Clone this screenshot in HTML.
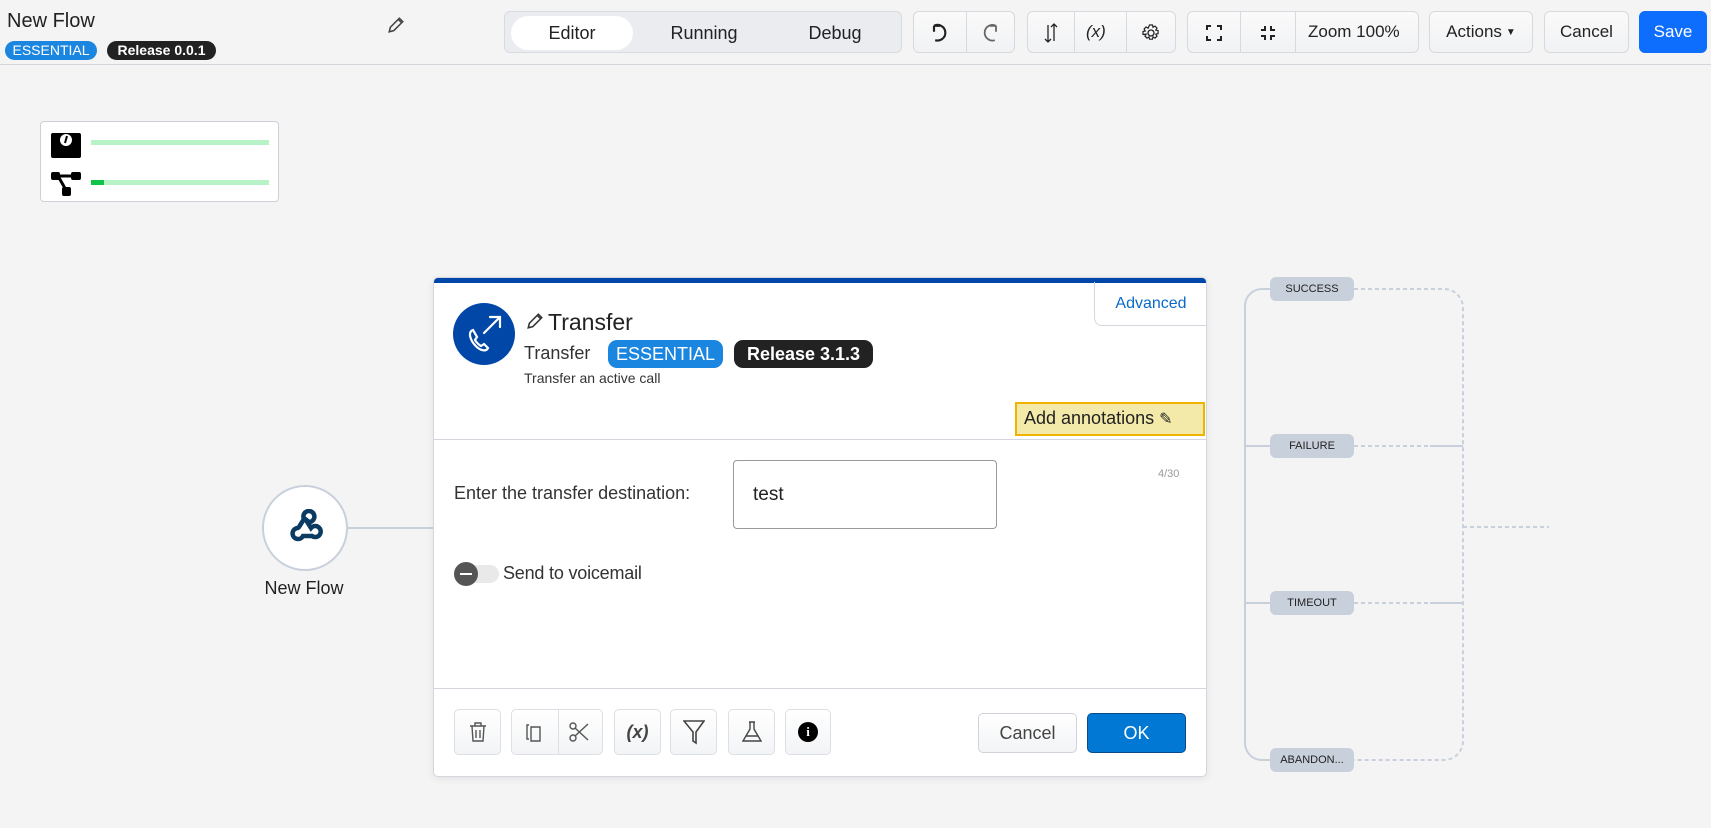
<!DOCTYPE html>
<html><head><meta charset="utf-8"><style>
*{box-sizing:border-box;margin:0;padding:0}
body{width:1711px;height:828px;background:#f4f4f4;font-family:"Liberation Sans",sans-serif;color:#222;position:relative;overflow:hidden}
.a{position:absolute}
.hdr{left:0;top:0;width:1711px;height:65px;border-bottom:1px solid #d4d6dc;background:#f4f4f4}
.badge{position:absolute;border-radius:10px;color:#fff;font-size:14px;text-align:center;font-weight:bold}
.btn{position:absolute;top:11px;height:42px;border:1px solid #d6d9de;border-radius:6px;background:linear-gradient(#fafafa,#f1f2f4);display:flex;align-items:center;justify-content:center;font-size:17px;color:#222}
.sep{position:absolute;top:0;bottom:0;width:1px;background:#d6d9de}
.pill{position:absolute;left:1270px;width:84px;height:24px;border-radius:6px;background:#c8d0dc;font-size:11px;text-align:center;line-height:24px;color:#222}
.fb{position:absolute;top:709px;height:46px;border:1px solid #dcdfe4;border-radius:5px;background:linear-gradient(#fff,#f3f4f6);display:flex;align-items:center;justify-content:center}
</style></head><body>
<div class="a hdr"></div>
<div class="a" style="left:7px;top:10px;font-size:20px">New Flow</div>
<div class="badge" style="left:5px;top:41px;width:92px;height:19px;background:#1a86e0;line-height:19px;font-weight:normal">ESSENTIAL</div>
<div class="badge" style="left:107px;top:41px;width:109px;height:19px;background:#222;line-height:19px">Release 0.0.1</div>
<svg class="a" style="left:387px;top:16px" width="18" height="18" viewBox="0 0 16 16"><path d="M11 2l3 3-8 8-4 1 1-4z M10 3l3 3" fill="none" stroke="#444" stroke-width="1.4"/></svg>

<div class="a" style="left:504px;top:11px;width:398px;height:42px;background:#eaecf0;border:1px solid #d8dbe0;border-radius:6px"></div>
<div class="a" style="left:511px;top:16px;width:122px;height:34px;background:#fff;border-radius:17px"></div>
<div class="a" style="left:511px;top:23px;width:122px;text-align:center;font-size:18px">Editor</div>
<div class="a" style="left:650px;top:23px;width:108px;text-align:center;font-size:18px">Running</div>
<div class="a" style="left:785px;top:23px;width:100px;text-align:center;font-size:18px">Debug</div>

<div class="btn" style="left:913px;width:102px"><div class="sep" style="left:52px"></div>
<svg class="a" style="left:14px;top:9px" width="24" height="24" viewBox="0 0 20 20"><path d="M5 4a6.5 6.5 0 1 1 1 12M5 4v5M5 4h5" fill="none" stroke="#222" stroke-width="1.8"/></svg>
<svg class="a" style="left:64px;top:9px" width="24" height="24" viewBox="0 0 20 20"><path d="M15 4a6.5 6.5 0 1 0-1 12M15 4v5M15 4h-5" fill="none" stroke="#666" stroke-width="1.5"/></svg></div>
<div class="btn" style="left:1027px;width:149px"><div class="sep" style="left:46px"></div><div class="sep" style="left:98px"></div>
<svg class="a" style="left:12px;top:9px" width="22" height="24" viewBox="0 0 22 24"><path d="M8 4v17M5 18l3 3 3-3M14 20V3M11 6l3-3 3 3" fill="none" stroke="#222" stroke-width="1.3"/></svg>
<span class="a" style="left:58px;top:10px;font-style:italic;font-size:17px">(x)</span>
<svg class="a" style="left:113px;top:11px" width="20" height="20" viewBox="0 0 20 20"><circle cx="10" cy="10" r="3" fill="none" stroke="#222" stroke-width="1.3"/><path d="M8.5 2h3l.5 2.3 2-1.2 2 2-1.2 2 2.3.5v3l-2.3.5 1.2 2-2 2-2-1.2-.5 2.3h-3l-.5-2.3-2 1.2-2-2 1.2-2L2 11.5v-3l2.3-.5-1.2-2 2-2 2 1.2z" fill="none" stroke="#222" stroke-width="1.2"/></svg></div>
<div class="btn" style="left:1187px;width:232px;justify-content:flex-start"><div class="sep" style="left:52px"></div><div class="sep" style="left:107px"></div>
<svg class="a" style="left:18px;top:13px" width="16" height="16" viewBox="0 0 16 16"><path d="M1 5V1h4M11 1h4v4M15 11v4h-4M5 15H1v-4" fill="none" stroke="#222" stroke-width="2"/></svg>
<svg class="a" style="left:72px;top:13px" width="16" height="16" viewBox="0 0 16 16"><path d="M1 5h4V1M11 1v4h4M15 11h-4v4M5 15v-4H1" fill="none" stroke="#222" stroke-width="2"/></svg>
<span class="a" style="left:120px;top:10px">Zoom 100%</span></div>
<div class="btn" style="left:1429px;width:104px">Actions<span style="font-size:10px;margin-left:4px">▼</span></div>
<div class="btn" style="left:1544px;width:85px">Cancel</div>
<div class="btn" style="left:1639px;width:68px;background:#0d6efd;border-color:#0d6efd;color:#fff">Save</div>

<div class="a" style="left:40px;top:121px;width:239px;height:81px;background:#fff;border:1px solid #ccd0d8;border-radius:4px"></div>
<svg class="a" style="left:51px;top:130px" width="30" height="28" viewBox="0 0 30 28"><rect x="0" y="3" width="30" height="25" rx="2"/><circle cx="15" cy="11" r="8" fill="#000"/><circle cx="15" cy="10" r="6" fill="#fff"/><path d="M16 6l-2 7" stroke="#000" stroke-width="2"/></svg>
<div class="a" style="left:91px;top:140px;width:178px;height:5px;background:#b8f3c8"></div>
<svg class="a" style="left:51px;top:172px" width="30" height="24" viewBox="0 0 30 24"><rect x="0" y="0" width="9" height="8" rx="2"/><rect x="20" y="0" width="10" height="8" rx="2"/><rect x="11" y="15" width="9" height="9" rx="2"/><path d="M5 4h20M7 4l8 14" stroke="#000" stroke-width="3" fill="none"/></svg>
<div class="a" style="left:91px;top:180px;width:178px;height:5px;background:#b8f3c8"></div>
<div class="a" style="left:91px;top:180px;width:13px;height:5px;background:#0ec54a"></div>

<div class="a" style="left:348px;top:527px;width:86px;height:2px;background:#c8d0dc"></div>
<div class="a" style="left:262px;top:485px;width:86px;height:86px;border-radius:50%;background:#fff;border:2px solid #c8d0dc"></div>
<svg class="a" style="left:285px;top:509px" width="38" height="36" viewBox="0 0 38 36"><g fill="none" stroke="#0b3a63" stroke-width="4.5" stroke-linecap="round"><path d="M14 18L19 10a5.5 5.5 0 1 1 5 3"/><path d="M24 13l-5-4M13 19a5.5 5.5 0 1 0 5 8h9"/><path d="M27 27a5.5 5.5 0 1 0-1-8l-5-8"/></g></svg>
<div class="a" style="left:244px;top:578px;width:120px;text-align:center;font-size:18px">New Flow</div>

<div class="a" style="left:433px;top:277px;width:774px;height:500px;background:#fff;border:1px solid #d4d8de;border-radius:5px;box-shadow:0 2px 8px rgba(0,0,0,.08);overflow:hidden">
<div style="height:5px;background:#0047ab"></div></div>
<div class="a" style="left:1094px;top:282px;width:113px;height:44px;border-left:1px solid #d4d8de;border-bottom:1px solid #d4d8de;border-bottom-left-radius:8px;color:#0a6ac8;font-size:16px;text-align:center;line-height:44px">Advanced</div>
<div class="a" style="left:453px;top:303px;width:62px;height:62px;border-radius:50%;background:#0047a8"></div>
<svg class="a" style="left:453px;top:303px" width="62" height="62" viewBox="0 0 62 62"><g fill="none" stroke="#fff" stroke-width="2.2" stroke-linecap="round"><path d="M31 30L47 14M37 14h10v10"/><path d="M20 27c-3 1-4 4-2 9s7 10 11 11c3 1 5 0 6-2l-4-4-3 2c-2-1-5-4-6-6l2-3z"/></g></svg>
<svg class="a" style="left:526px;top:312px" width="18" height="18" viewBox="0 0 16 16"><path d="M11 2l3 3-8 8-4 1 1-4z M10 3l3 3" fill="none" stroke="#333" stroke-width="1.4"/></svg>
<div class="a" style="left:548px;top:309px;font-size:23px">Transfer</div>
<div class="a" style="left:524px;top:343px;font-size:18px;color:#333">Transfer</div>
<div class="badge" style="left:608px;top:340px;width:115px;height:28px;line-height:28px;background:#1a86e0;border-radius:9px;font-size:18px;font-weight:normal">ESSENTIAL</div>
<div class="badge" style="left:734px;top:340px;width:139px;height:28px;line-height:28px;background:#222;border-radius:9px;font-size:18px">Release 3.1.3</div>
<div class="a" style="left:524px;top:370px;font-size:14px;color:#333">Transfer an active call</div>
<div class="a" style="left:1015px;top:402px;width:190px;height:34px;background:#f3e9a8;border:2px solid #f0b400;font-size:18px;line-height:29px;padding-left:7px">Add annotations <span style="font-size:16px">✎</span></div>
<div class="a" style="left:434px;top:439px;width:772px;height:1px;background:#d4d8de"></div>
<div class="a" style="left:454px;top:483px;font-size:18px;color:#333">Enter the transfer destination:</div>
<div class="a" style="left:733px;top:460px;width:264px;height:69px;border:1px solid #999;border-radius:4px;font-size:19px;padding:23px 0 0 19px">test</div>
<div class="a" style="left:1158px;top:468px;font-size:11px;color:#999">4/30</div>
<div class="a" style="left:455px;top:565px;width:44px;height:18px;border-radius:9px;background:#e9e9e9"></div>
<div class="a" style="left:454px;top:562px;width:24px;height:24px;border-radius:50%;background:#555"></div>
<div class="a" style="left:460px;top:573px;width:12px;height:2px;background:#fff"></div>
<div class="a" style="left:503px;top:563px;font-size:18px;color:#333;letter-spacing:-0.2px">Send to voicemail</div>
<div class="a" style="left:434px;top:688px;width:772px;height:1px;background:#d4d8de"></div>

<div class="fb" style="left:454px;width:47px"><svg width="20" height="22" viewBox="0 0 20 22"><path d="M2 5h16M7 5V2h6v3M4 5l1 15h10l1-15M8 9v8M12 9v8" fill="none" stroke="#555" stroke-width="1.4"/></svg></div>
<div class="fb" style="left:511px;width:92px;justify-content:space-around"><div class="sep" style="left:46px;background:#dcdfe4"></div><svg width="18" height="22" viewBox="0 0 18 22"><path d="M4 4H2v14h2M6 6h9v14H6z" fill="none" stroke="#555" stroke-width="1.4"/></svg><svg width="22" height="22" viewBox="0 0 22 22"><circle cx="5" cy="5" r="3" fill="none" stroke="#555" stroke-width="1.4"/><circle cx="5" cy="17" r="3" fill="none" stroke="#555" stroke-width="1.4"/><path d="M7 7l13 12M7 15L20 3" stroke="#555" stroke-width="1.4"/></svg></div>
<div class="fb" style="left:614px;width:47px;font-style:italic;font-size:18px;color:#444;font-weight:bold">(x)</div>
<div class="fb" style="left:670px;width:47px"><svg width="22" height="26" viewBox="0 0 22 26"><path d="M1 2h20l-8 11v11l-3-2v-9z" fill="none" stroke="#444" stroke-width="1.6"/></svg></div>
<div class="fb" style="left:728px;width:47px"><svg width="22" height="24" viewBox="0 0 22 24"><path d="M8 2h6M9 2v7L2 21h18L13 9V2M5 16h12" fill="none" stroke="#444" stroke-width="1.4"/></svg></div>
<div class="fb" style="left:785px;width:46px"><div style="width:20px;height:20px;border-radius:50%;background:#000;color:#fff;font-weight:bold;font-size:13px;text-align:center;line-height:20px;font-family:'Liberation Serif',serif">i</div></div>
<div class="fb" style="left:978px;top:713px;width:99px;height:40px;font-size:18px;color:#444;border-color:#d0d4da">Cancel</div>
<div class="fb" style="left:1087px;top:713px;width:99px;height:40px;font-size:18px;color:#fff;background:#0078d4;border-color:#0a4a8a">OK</div>

<svg class="a" style="left:1230px;top:270px" width="340" height="510" viewBox="1230 270 340 510">
<g fill="none" stroke="#c8d0dc" stroke-width="2">
<path d="M1270 289h-8a17 17 0 0 0-17 17v437a17 17 0 0 0 17 17h8"/>
<path d="M1245 446h25M1245 603h25M1430 446h33M1430 603h33"/>
</g>
<g fill="none" stroke="#c8d0dc" stroke-width="2" stroke-dasharray="4 3">
<path d="M1354 289h90a19 19 0 0 1 19 19v433a19 19 0 0 1-19 19h-90"/>
<path d="M1354 446h76M1354 603h76M1463 527h86"/>
</g></svg>
<div class="pill" style="top:277px">SUCCESS</div>
<div class="pill" style="top:434px">FAILURE</div>
<div class="pill" style="top:591px">TIMEOUT</div>
<div class="pill" style="top:748px">ABANDON...</div>
</body></html>
